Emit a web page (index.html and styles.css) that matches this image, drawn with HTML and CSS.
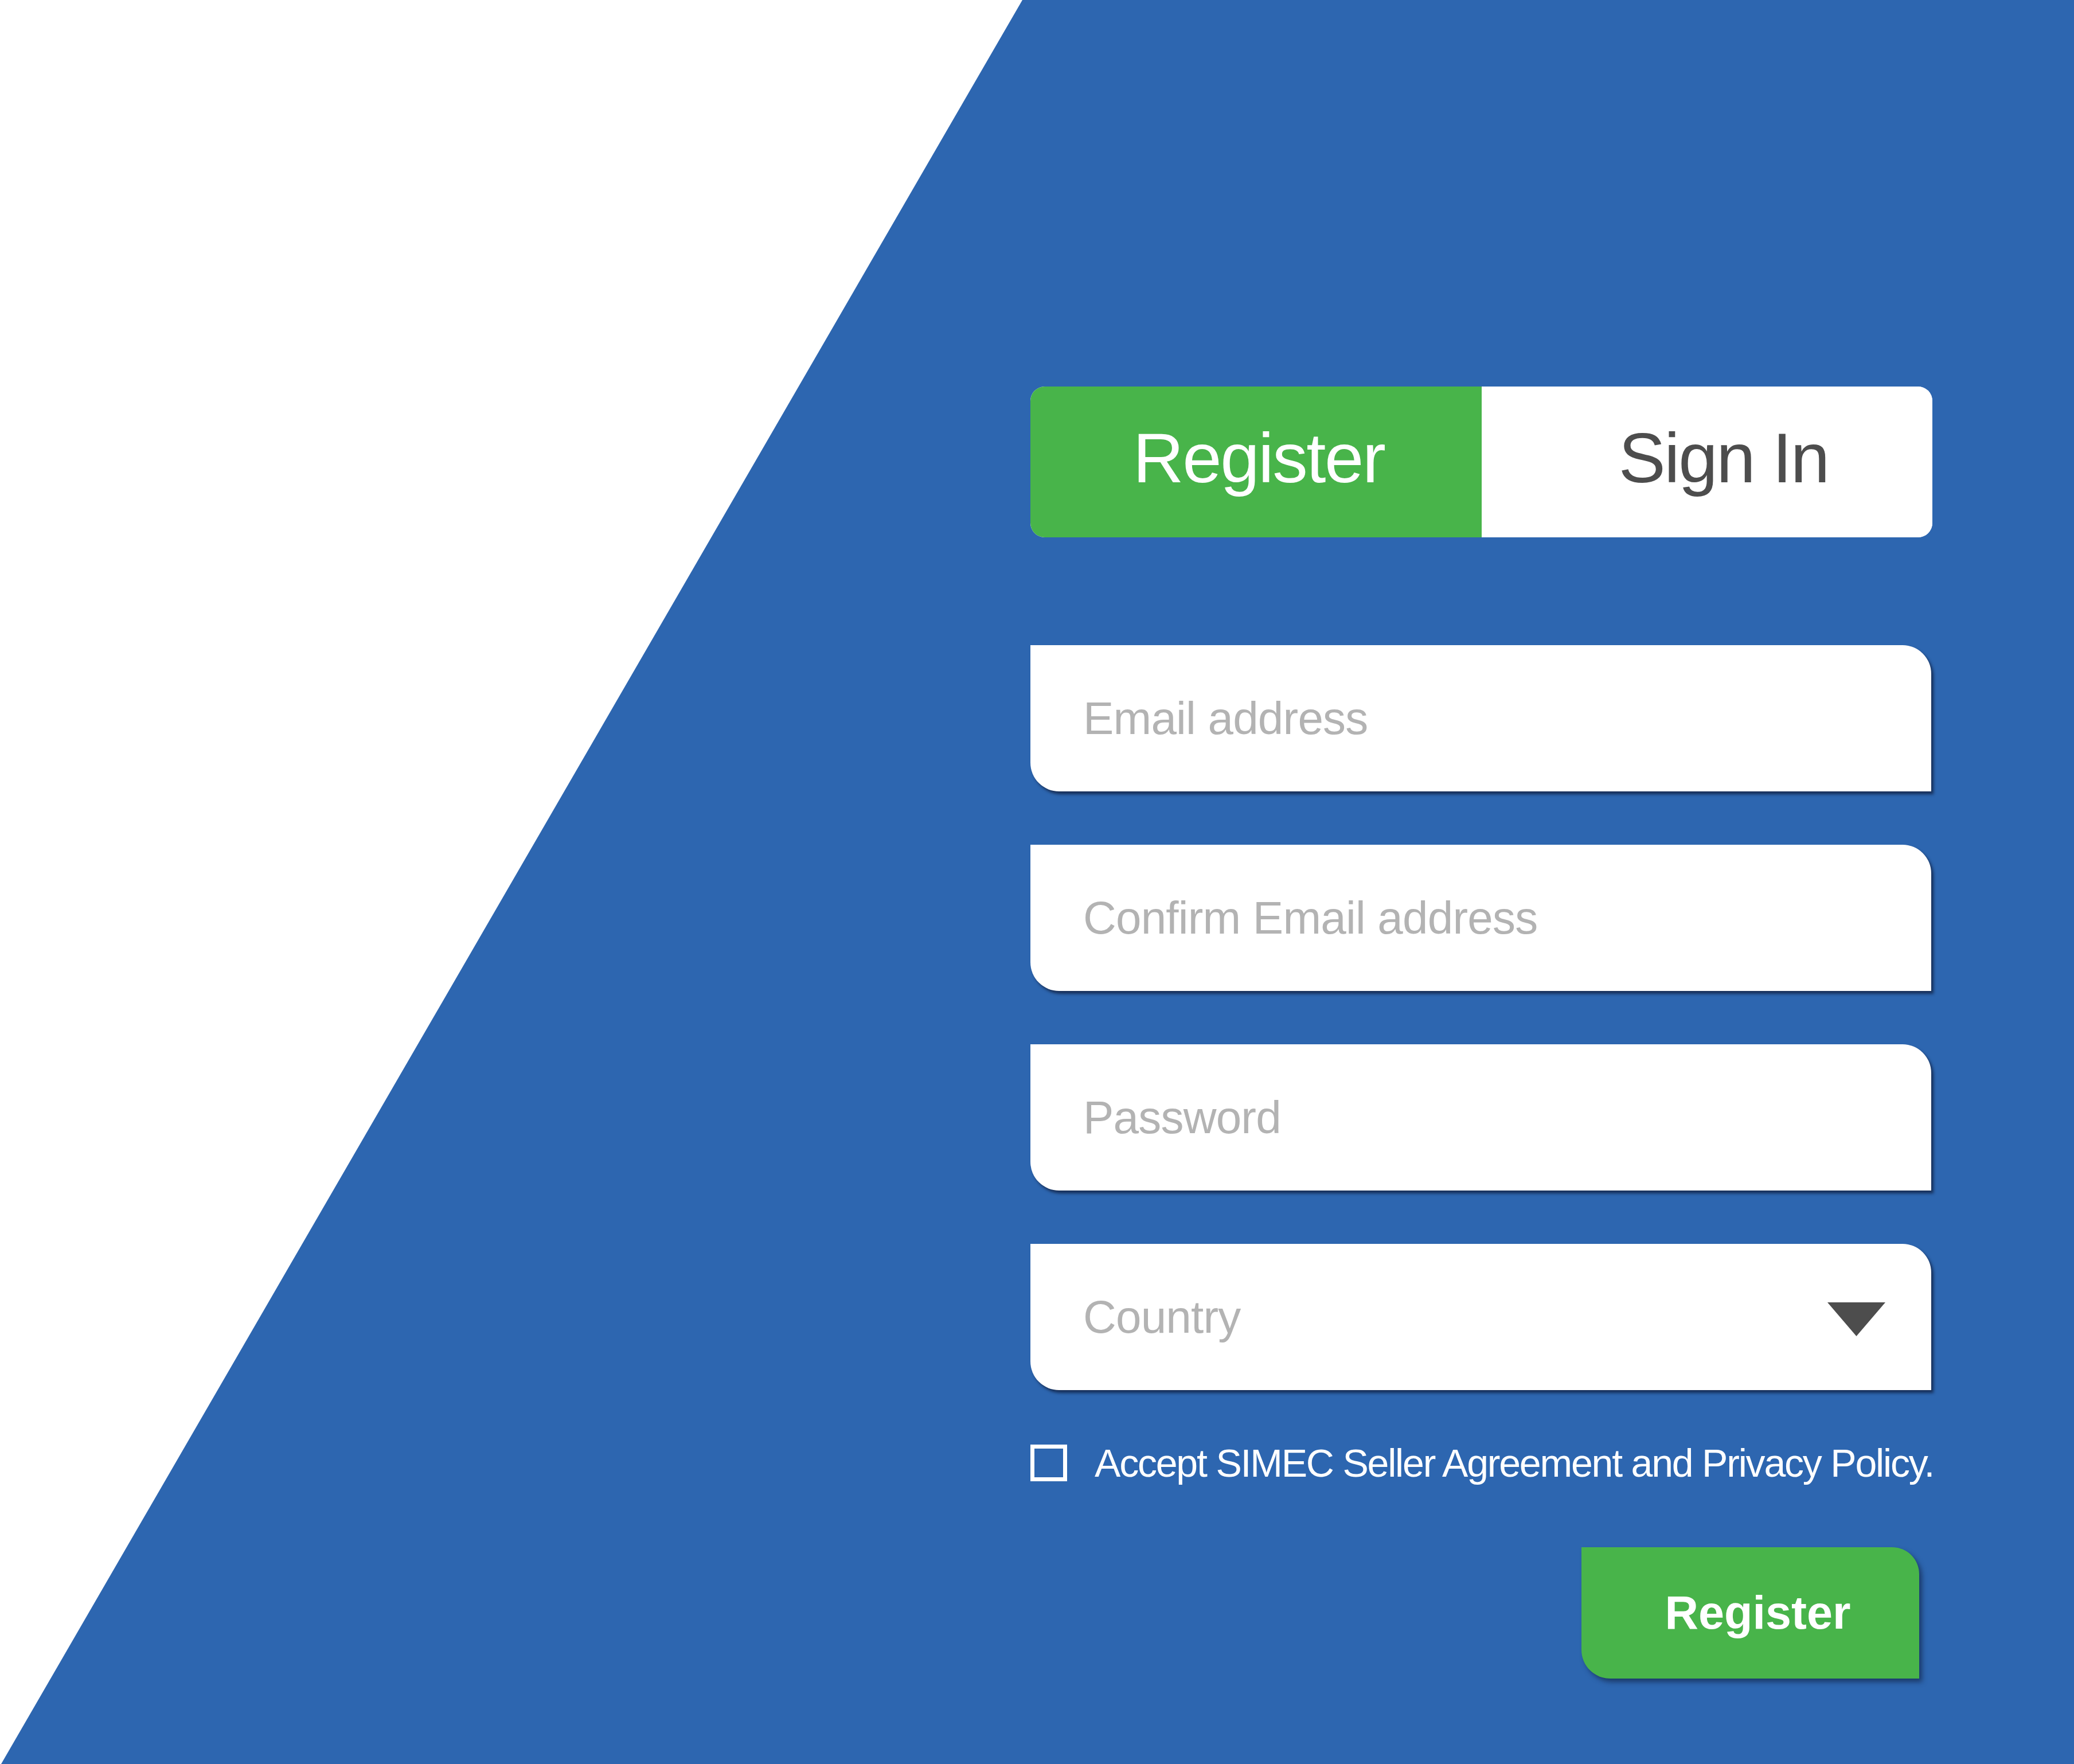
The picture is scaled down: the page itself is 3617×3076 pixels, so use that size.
FILE: index.html
```html
<!DOCTYPE html>
<html lang="en">
<head>
<meta charset="utf-8">
<title>Register</title>
<link rel="stylesheet" href="styles.css">
</head>
<body>
<main class="page">
  <form class="form" onsubmit="return false">
    <div class="tabs">
      <button type="button" class="tab tab-active">Register</button>
      <button type="button" class="tab tab-idle">Sign In</button>
    </div>
    <div class="fields">
      <input class="field" type="email" placeholder="Email address">
      <input class="field" type="email" placeholder="Confirm Email address">
      <input class="field" type="password" placeholder="Password">
      <div class="field field-select">
        <span class="placeholder">Country</span>
        <svg class="caret" width="101" height="59" viewBox="0 0 101 59" aria-hidden="true"><polygon points="0,0 101,0 50.5,59" fill="#4d4d4d"/></svg>
      </div>
    </div>
    <label class="agree">
      <span class="check"></span>
      <span class="agree-text">Accept SIMEC Seller Agreement and Privacy Policy.</span>
    </label>
    <button type="submit" class="submit">Register</button>
  </form>
</main>
</body>
</html>
```
FILE: styles.css
```css
html, body {
  margin: 0;
  padding: 0;
}
body {
  width: 3617px;
  height: 3076px;
  background: #ffffff;
  font-family: "Liberation Sans", Arial, sans-serif;
  overflow: hidden;
}
.page {
  position: relative;
  width: 3617px;
  height: 3076px;
  box-sizing: border-box;
  padding: 674px 0 0 1797px;
}
.page::before {
  content: "";
  position: absolute;
  inset: 0;
  background: #2d66b0;
  clip-path: polygon(1783px 0, 3617px 0, 3617px 3076px, 2px 3076px);
  z-index: 0;
}
.form {
  position: relative;
  z-index: 1;
  width: 1573px;
  display: flex;
  flex-direction: column;
}
.tabs {
  display: flex;
  height: 263px;
  border-radius: 25px;
  overflow: hidden;
  background: #ffffff;
}
.tab {
  flex: none;
  width: 50%;
  box-sizing: border-box;
  border: 0;
  margin: 0;
  font-family: inherit;
  font-size: 123px;
  letter-spacing: -2.4px;
  display: flex;
  align-items: center;
  justify-content: center;
  padding: 0 0 14px 0;
  cursor: pointer;
}
.tab-active {
  background: #48b44a;
  color: #ffffff;
  padding-left: 10px;
}
.tab-idle {
  background: #ffffff;
  color: #4d4d4d;
  padding-left: 58px;
}
.fields {
  margin-top: 188px;
  display: flex;
  flex-direction: column;
  gap: 93px;
}
.field {
  width: 1571px;
  height: 255px;
  box-sizing: border-box;
  border: 0;
  margin: 0;
  outline: none;
  background: #ffffff;
  border-radius: 0 50px 0 50px;
  box-shadow: 4px 5px 5px rgba(16, 30, 60, 0.75);
  padding: 0 80px 0 92px;
  font-family: inherit;
  font-size: 80px;
  letter-spacing: -0.8px;
  color: #4d4d4d;
}
.field::placeholder {
  color: #b3b3b3;
  opacity: 1;
}
.field-select {
  display: flex;
  align-items: center;
  justify-content: space-between;
}
.placeholder {
  color: #b3b3b3;
}
.caret {
  display: block;
  margin-top: 8px;
}
.agree {
  margin-top: 95px;
  height: 64px;
  display: flex;
  align-items: center;
  gap: 48px;
  color: #ffffff;
  cursor: pointer;
}
.check {
  width: 64px;
  height: 64px;
  box-sizing: border-box;
  border: 7px solid #ffffff;
  flex: none;
}
.agree-text {
  font-size: 68px;
  line-height: 64px;
  letter-spacing: -2.2px;
  white-space: nowrap;
}
.submit {
  align-self: flex-end;
  margin: 115px 23px 0 0;
  width: 589px;
  height: 229px;
  border: 0;
  background: #48b44a;
  color: #ffffff;
  font-family: inherit;
  font-weight: bold;
  font-size: 81px;
  border-radius: 0 47px 0 50px;
  box-shadow: 5px 6px 8px rgba(16, 30, 60, 0.6);
  padding: 0 0 0 26px;
  cursor: pointer;
}
```
